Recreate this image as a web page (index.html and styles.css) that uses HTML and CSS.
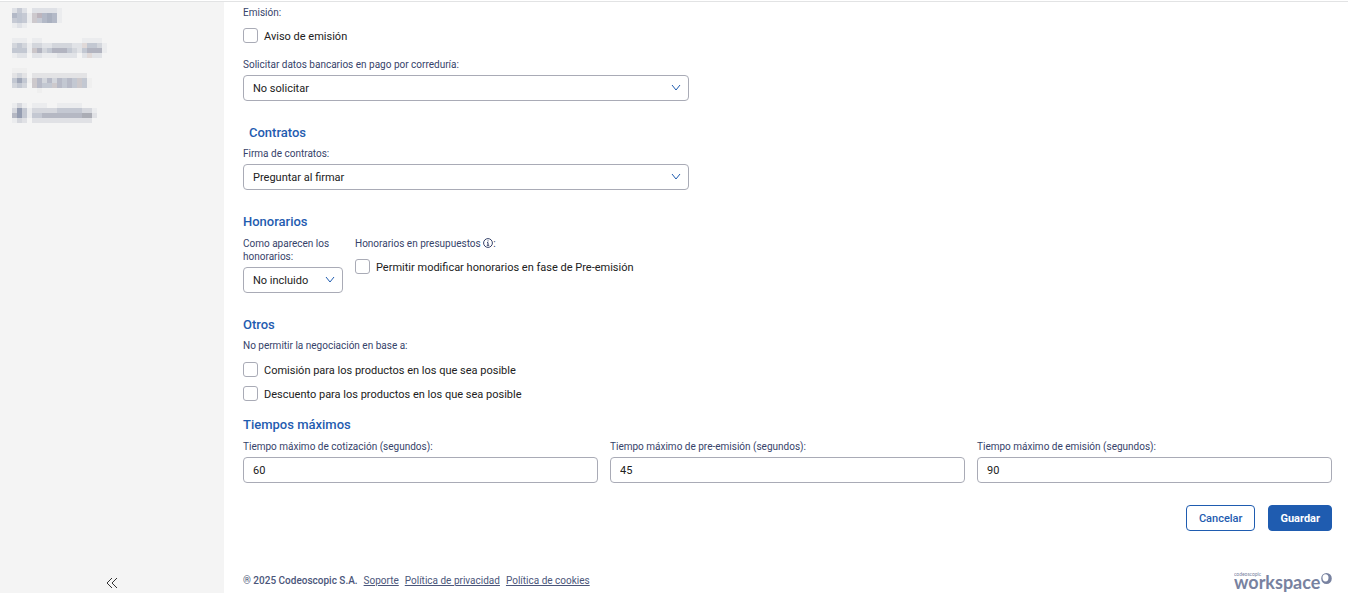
FILE: index.html
```html
<!DOCTYPE html>
<html lang="es">
<head>
    <meta charset="UTF-8">
    <meta name="viewport" content="width=device-width, initial-scale=1.0">
    <title>Configuración</title>
    <link rel="stylesheet" href="styles.css">
</head>
<body>
    <aside class="sidebar">
        <nav class="menu">
            <a href="#" aria-label="Menú 1">
                <svg width="100" height="20" viewBox="0 0 20 4" shape-rendering="crispEdges">
                    <path fill="#dfe1e6" d="M0 0h1v1h-1zM2 0h1v1h-1zM4 0h5v1h-5zM1 3h1v1h-1z"/>
                    <path fill="#ebecee" d="M0 3h1v1h-1zM2 3h1v1h-1zM3 1h1v2h-1zM9 0h1v3h-1z"/>
                    <path fill="#c6cad4" d="M1 0h1v1h-1zM0 2h1v1h-1zM2 2h1v1h-1zM5 2h1v1h-1zM2 1h1v1h-1z"/>
                    <path fill="#b3b9c7" d="M0 1h1v1h-1zM6 1h1v2h-1zM8 1h1v2h-1z"/>
                    <path fill="#bfc5d1" d="M1 1h1v2h-1z"/>
                    <path fill="#cdc9cd" d="M4 1h1v2h-1z"/>
                    <path fill="#bdb5bd" d="M5 1h1v1h-1z"/>
                    <path fill="#a9b0bf" d="M7 1h1v2h-1z"/>
                </svg>
            </a>
            <a href="#" aria-label="Menú 2">
                <svg width="100" height="20" viewBox="0 0 20 4" shape-rendering="crispEdges">
                    <path fill="#ebecee" d="M0 0h3v1h-3zM4 0h2v1h-2zM14 0h4v1h-4zM0 3h1v1h-1zM3 1h1v2h-1zM6 3h3v1h-3zM18 1h1v2h-1z"/>
                    <path fill="#e1e3e7" d="M1 3h2v1h-2zM4 3h2v1h-2zM9 3h4v1h-4zM14 3h4v1h-4zM6 1h2v1h-2zM12 1h2v1h-2zM13 2h1v1h-1z"/>
                    <path fill="#d3d6dc" d="M0 1h1v1h-1zM2 1h1v1h-1zM4 1h2v1h-2zM8 1h4v1h-4zM6 2h1v1h-1zM12 2h1v1h-1zM17 1h1v1h-1z"/>
                    <path fill="#e0d9d8" d="M14 1h1v1h-1zM15 3h1v1h-1z"/>
                    <path fill="#c3c8d2" d="M1 1h1v1h-1zM0 2h3v1h-3zM7 2h1v1h-1zM11 2h1v1h-1zM14 2h1v1h-1zM15 1h2v1h-2z"/>
                    <path fill="#cbc6c9" d="M4 2h1v1h-1z"/>
                    <path fill="#b2b4c0" d="M5 2h1v1h-1zM8 2h3v1h-3zM15 2h3v1h-3z"/>
                </svg>
            </a>
            <a href="#" aria-label="Menú 3">
                <svg width="100" height="25" viewBox="0 0 20 5" shape-rendering="crispEdges">
                    <path fill="#efefef" d="M0 0h3v1h-3zM5 4h1v1h-1zM3 2h1v1h-1zM15 2h1v2h-1z"/>
                    <path fill="#e3e3e5" d="M0 1h1v1h-1zM2 1h1v1h-1zM4 1h11v1h-11z"/>
                    <path fill="#d3d6dc" d="M0 3h1v1h-1zM2 3h1v1h-1zM1 1h1v1h-1zM6 2h1v1h-1zM8 2h1v1h-1z"/>
                    <path fill="#c3c8d2" d="M0 2h1v1h-1zM2 2h1v1h-1zM1 3h1v1h-1zM6 3h2v1h-2zM10 2h1v2h-1zM12 2h1v2h-1zM14 2h1v2h-1z"/>
                    <path fill="#cdc9cc" d="M4 2h1v2h-1zM8 3h1v1h-1zM13 2h1v2h-1z"/>
                    <path fill="#b7bac7" d="M5 2h1v2h-1zM7 2h1v1h-1zM9 2h1v2h-1zM11 2h1v2h-1z"/>
                    <path fill="#a0a7b8" d="M1 2h1v1h-1z"/>
                </svg>
            </a>
            <a href="#" aria-label="Menú 4">
                <svg width="100" height="20" viewBox="0 0 20 4" shape-rendering="crispEdges">
                    <path fill="#ebecee" d="M0 0h1v1h-1zM2 0h1v1h-1zM4 0h3v1h-3zM9 0h5v1h-5zM0 3h1v1h-1zM3 1h1v2h-1zM16 1h1v1h-1z"/>
                    <path fill="#e0e1e5" d="M2 3h1v1h-1zM4 3h12v1h-12zM16 2h1v1h-1z"/>
                    <path fill="#d5d7dd" d="M1 0h1v1h-1zM1 3h1v1h-1zM0 1h1v1h-1zM4 1h5v1h-5zM14 1h2v1h-2z"/>
                    <path fill="#c4c8d2" d="M2 1h1v2h-1zM4 2h2v1h-2zM9 1h5v1h-5z"/>
                    <path fill="#b5b8c3" d="M0 2h1v1h-1zM6 2h8v1h-8z"/>
                    <path fill="#959db1" d="M1 1h1v2h-1z"/>
                    <path fill="#abadb5" d="M14 2h2v1h-2z"/>
                </svg>
            </a>
        </nav>
        <button class="collapse" type="button" aria-label="Contraer menú">
            <svg width="12" height="12" viewBox="0 0 12 12" fill="none" stroke="#333" stroke-width="1">
                <path d="M6 1L1 6l5 5M11 1L6 6l5 5"/>
            </svg>
        </button>
    </aside>

    <main class="content">
        <form class="settings">
            <div class="label">Emisión:</div>
            <label class="check"><input type="checkbox"> Aviso de emisión</label>

            <label class="label bank" for="datos">Solicitar datos bancarios en pago por correduría:</label>
            <div class="select wide">
                <select id="datos"><option>No solicitar</option></select>
                <svg width="10" height="8" viewBox="0 0 10 8"><path d="M1 1l4 5 4-5"/></svg>
            </div>

            <h2 class="indent">Contratos</h2>
            <label class="label" for="firma">Firma de contratos:</label>
            <div class="select wide">
                <select id="firma"><option>Preguntar al firmar</option></select>
                <svg width="10" height="8" viewBox="0 0 10 8"><path d="M1 1l4 5 4-5"/></svg>
            </div>

            <h2>Honorarios</h2>
            <div class="fees">
                <div class="fees-mode">
                    <label class="label" for="honorarios">Como aparecen los honorarios:</label>
                    <div class="select">
                        <select id="honorarios"><option>No incluido</option></select>
                        <svg width="10" height="8" viewBox="0 0 10 8"><path d="M1 1l4 5 4-5"/></svg>
                    </div>
                </div>
                <div>
                    <div class="label">Honorarios en presupuestos <svg class="info" width="10" height="10" viewBox="0 0 10 10"><circle cx="5" cy="5" r="4.4"/><path d="M5 2.4v1M4 4.6h1v2.6M3.8 7.3h2.4"/></svg>:</div>
                    <label class="check"><input type="checkbox"> Permitir modificar honorarios en fase de Pre-emisión</label>
                </div>
            </div>

            <h2>Otros</h2>
            <div class="label">No permitir la negociación en base a:</div>
            <div class="checks">
                <label class="check"><input type="checkbox"> Comisión para los productos en los que sea posible</label>
                <label class="check"><input type="checkbox"> Descuento para los productos en los que sea posible</label>
            </div>

            <h2 class="times-title">Tiempos máximos</h2>
            <div class="times">
                <div>
                    <label class="label" for="cotizacion">Tiempo máximo de cotización (segundos):</label>
                    <input type="text" id="cotizacion" value="60">
                </div>
                <div>
                    <label class="label" for="preemision">Tiempo máximo de pre-emisión (segundos):</label>
                    <input type="text" id="preemision" value="45">
                </div>
                <div>
                    <label class="label" for="emision">Tiempo máximo de emisión (segundos):</label>
                    <input type="text" id="emision" value="90">
                </div>
            </div>

            <div class="actions">
                <button class="btn" type="button">Cancelar</button>
                <button class="btn primary" type="button">Guardar</button>
            </div>
        </form>

        <footer class="footer">
            <div class="legal">
                <span>® 2025 Codeoscopic S.A.</span>
                <a href="#">Soporte</a>
                <a href="#">Política de privacidad</a>
                <a href="#">Política de cookies</a>
            </div>
            <svg class="logo" width="98" height="22" viewBox="0 0 98 22">
                <text class="logo-small" x="0" y="5">codeoscopic</text>
                <text class="logo-name" x="0" y="18">workspace</text>
                <path fill-rule="evenodd" d="M92.500 2a5.300 5.500 0 1 1 0 11a5.300 5.500 0 1 1 0-11zM91.500 3.200a3 3.600 0 1 0 0 7.200a3 3.600 0 1 0 0-7.200z"/>
            </svg>
        </footer>
    </main>
</body>
</html>
```

FILE: styles.css
```css
* {
    box-sizing: border-box;
}
body {
    margin: 0;
    min-height: 100vh;
    display: flex;
    border-top: 1px solid #fff;
    font-family: Roboto, sans-serif;
    font-size: 11px;
    color: #212121;
    background-color: #fff;
}
.sidebar {
    width: 224px;
    flex-shrink: 0;
    display: flex;
    flex-direction: column;
    justify-content: space-between;
    padding: 6px 12px 4px;
    background-color: #f4f4f4;
    border-top: 1px solid #e2e3e4;
}
.menu {
    display: flex;
    flex-direction: column;
    gap: 10px;
}
.menu a,
.menu svg {
    display: block;
}
.collapse {
    align-self: center;
    display: flex;
    padding: 0;
    border: 0;
    background: none;
    cursor: pointer;
}
.content {
    flex: 1;
    display: flex;
    flex-direction: column;
    justify-content: space-between;
    padding: 4px 16px 0 19px;
    border-top: 1px solid #e2e3e4;
}
h2 {
    margin: 23px 0 5px;
    font-size: 13px;
    font-weight: 500;
    line-height: 18px;
    color: #1f5cb0;
}
.indent {
    padding-left: 6px;
}
.label {
    display: block;
    margin-bottom: 4px;
    font-size: 10px;
    line-height: 13px;
    color: #36436a;
}
.bank {
    margin-top: 11px;
}
.check {
    display: flex;
    align-items: flex-start;
    gap: 6px;
    height: 24px;
    padding-top: 5px;
    line-height: 17px;
}
.check input {
    appearance: none;
    width: 15px;
    height: 15px;
    margin: 0;
    border: 1px solid #a9abb6;
    border-radius: 3px;
    background-color: #fff;
}
.checks {
    padding-top: 1px;
}
.select {
    display: grid;
    align-items: center;
}
.select select,
.select svg {
    grid-area: 1 / 1;
}
.select svg {
    justify-self: end;
    margin-right: 8px;
    fill: none;
    stroke: #1f5cb0;
    pointer-events: none;
}
.wide {
    width: 41%;
}
select,
.times input {
    appearance: none;
    width: 100%;
    height: 26px;
    padding: 0 9px;
    border: 1px solid #a9abb6;
    border-radius: 4px;
    background-color: #fff;
    font-family: inherit;
    font-size: 11px;
    color: #212121;
}
.fees {
    display: flex;
    gap: 12px;
    margin-top: 6px;
}
.fees-mode {
    width: 100px;
}
.info {
    vertical-align: -1px;
    fill: none;
    stroke: #36436a;
}
.times-title {
    margin-top: 11px;
}
.times {
    display: grid;
    grid-template-columns: repeat(3, 1fr);
    gap: 12px;
    margin-top: 6px;
}
.actions {
    display: flex;
    justify-content: flex-end;
    gap: 13px;
    margin-top: 22px;
}
.btn {
    height: 26px;
    padding: 0 12px;
    border: 1px solid #1f5cb0;
    border-radius: 4px;
    background-color: #fff;
    color: #1f5cb0;
    font-family: inherit;
    font-size: 11px;
    font-weight: 500;
    cursor: pointer;
}
.btn.primary {
    padding: 0 11px;
    background-color: #1f5cb0;
    color: #fff;
    font-weight: 700;
}
.footer {
    display: flex;
    justify-content: space-between;
    align-items: center;
    font-size: 10px;
    color: #4b567a;
}
.legal {
    display: flex;
    gap: 6px;
    padding-bottom: 4px;
}
.legal span {
    font-weight: 500;
}
.legal a {
    color: #4b567a;
}
.logo {
    fill: #7882a0;
    font-family: Lato, sans-serif;
}
.logo-small {
    font-size: 5px;
}
.logo-name {
    font-size: 18px;
    font-weight: 700;
}
```
